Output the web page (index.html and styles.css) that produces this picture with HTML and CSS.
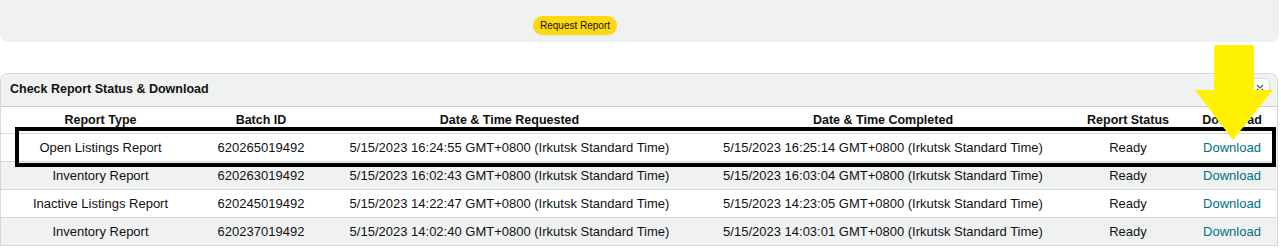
FILE: index.html
```html
<!DOCTYPE html>
<html>
<head>
<meta charset="utf-8">
<link rel="stylesheet" href="styles.css">
</head>
<body>
<div class="page">
  <div class="band">
    <button class="req-btn">Request Report</button>
  </div>
  <div class="panel">
    <div class="panel-head">
      <span class="panel-title">Check Report Status &amp; Download</span>
      <button class="collapse-btn"><svg width="12" height="12" viewBox="0 0 12 12"><path d="M3 3l3 3 3-3M3 7l3 3 3-3" fill="none" stroke="#555" stroke-width="1.2"/></svg></button>
    </div>
    <table class="reports">
      <colgroup>
        <col class="c1"><col class="c2"><col class="c3"><col class="c4"><col class="c5"><col class="c6">
      </colgroup>
      <thead>
        <tr><th>Report Type</th><th>Batch ID</th><th>Date &amp; Time Requested</th><th>Date &amp; Time Completed</th><th>Report Status</th><th>Download</th></tr>
      </thead>
      <tbody>
        <tr><td>Open Listings Report</td><td>620265019492</td><td>5/15/2023 16:24:55 GMT+0800 (Irkutsk Standard Time)</td><td>5/15/2023 16:25:14 GMT+0800 (Irkutsk Standard Time)</td><td>Ready</td><td><a href="#">Download</a></td></tr>
        <tr><td>Inventory Report</td><td>620263019492</td><td>5/15/2023 16:02:43 GMT+0800 (Irkutsk Standard Time)</td><td>5/15/2023 16:03:04 GMT+0800 (Irkutsk Standard Time)</td><td>Ready</td><td><a href="#">Download</a></td></tr>
        <tr><td>Inactive Listings Report</td><td>620245019492</td><td>5/15/2023 14:22:47 GMT+0800 (Irkutsk Standard Time)</td><td>5/15/2023 14:23:05 GMT+0800 (Irkutsk Standard Time)</td><td>Ready</td><td><a href="#">Download</a></td></tr>
        <tr><td>Inventory Report</td><td>620237019492</td><td>5/15/2023 14:02:40 GMT+0800 (Irkutsk Standard Time)</td><td>5/15/2023 14:03:01 GMT+0800 (Irkutsk Standard Time)</td><td>Ready</td><td><a href="#">Download</a></td></tr>
      </tbody>
    </table>
  </div>
  <div class="highlight"></div>
  <svg class="arrow" width="80" height="100" viewBox="0 0 80 100">
    <path d="M19 2 Q19 0 21 0 H57 Q59 0 59 2 V45 H78 L38 95 L0 45 H19 Z" fill="#fff200"/>
  </svg>
</div>
</body>
</html>
```

FILE: styles.css
```css
html, body {
  margin: 0;
  padding: 0;
  background: #fff;
}
body {
  font-family: "Liberation Sans", Arial, sans-serif;
  color: #0f1111;
  width: 1281px;
  height: 249px;
  overflow: hidden;
}
.page {
  position: relative;
}
.band {
  height: 42px;
  width: 1279px;
  background: #f0f1f1;
  border-radius: 0 0 8px 8px;
  display: flex;
  justify-content: flex-start;
  align-items: flex-start;
  padding: 16px 0 0 533px;
  box-sizing: border-box;
}
.req-btn {
  height: 19px;
  width: 84px;
  padding: 0;
  border: none;
  border-radius: 10px;
  background: #ffd814;
  box-shadow: 0 1px 2px rgba(213, 217, 217, .5);
  font-family: "Liberation Sans", Arial, sans-serif;
  font-size: 10px;
  color: #0f1111;
  line-height: 19px;
}
.panel {
  margin-top: 31px;
  width: 1278px;
  border: 1px solid #d5d9d9;
  border-bottom: none;
  border-radius: 8px 8px 0 0;
  overflow: hidden;
  box-sizing: border-box;
}
.panel-head {
  height: 32px;
  background: #f0f2f2;
  border-bottom: 1px solid #c9cccc;
  display: flex;
  align-items: center;
  justify-content: space-between;
  padding: 0 7px 0 9px;
}
.panel-title {
  font-weight: bold;
  font-size: 12.5px;
  padding-bottom: 3px;
}
.collapse-btn {
  align-self: flex-start;
  margin-top: 4px;
  width: 20px;
  height: 20px;
  padding: 0;
  border: 1px solid #d5d9d9;
  border-radius: 6px;
  background: #fff;
  display: flex;
  align-items: center;
  justify-content: center;
}
.reports {
  width: 100%;
  border-collapse: collapse;
  table-layout: fixed;
  font-size: 13px;
}
.c1 { width: 199px; }
.c2 { width: 122px; }
.c3 { width: 375px; }
.c4 { width: 372px; }
.c5 { width: 118px; }
.c6 { width: auto; }
.reports th {
  font-weight: bold;
  font-size: 12.5px;
  height: 26px;
  padding: 0;
  text-align: center;
  background: #fff;
  border-bottom: 1px solid #d5d9d9;
  vertical-align: middle;
}
.reports td {
  height: 27px;
  padding: 0;
  text-align: center;
  border-bottom: 1px solid #d5d9d9;
  white-space: nowrap;
  vertical-align: middle;
}
.reports tbody tr:nth-child(even) td {
  background: #f0f2f2;
}
.reports a {
  color: #007185;
  text-decoration: none;
}
.highlight {
  position: absolute;
  left: 15px;
  top: 127px;
  width: 1261px;
  height: 40px;
  border: 4px solid #000;
  box-sizing: border-box;
}
.arrow {
  position: absolute;
  left: 1195px;
  top: 45px;
}
```
